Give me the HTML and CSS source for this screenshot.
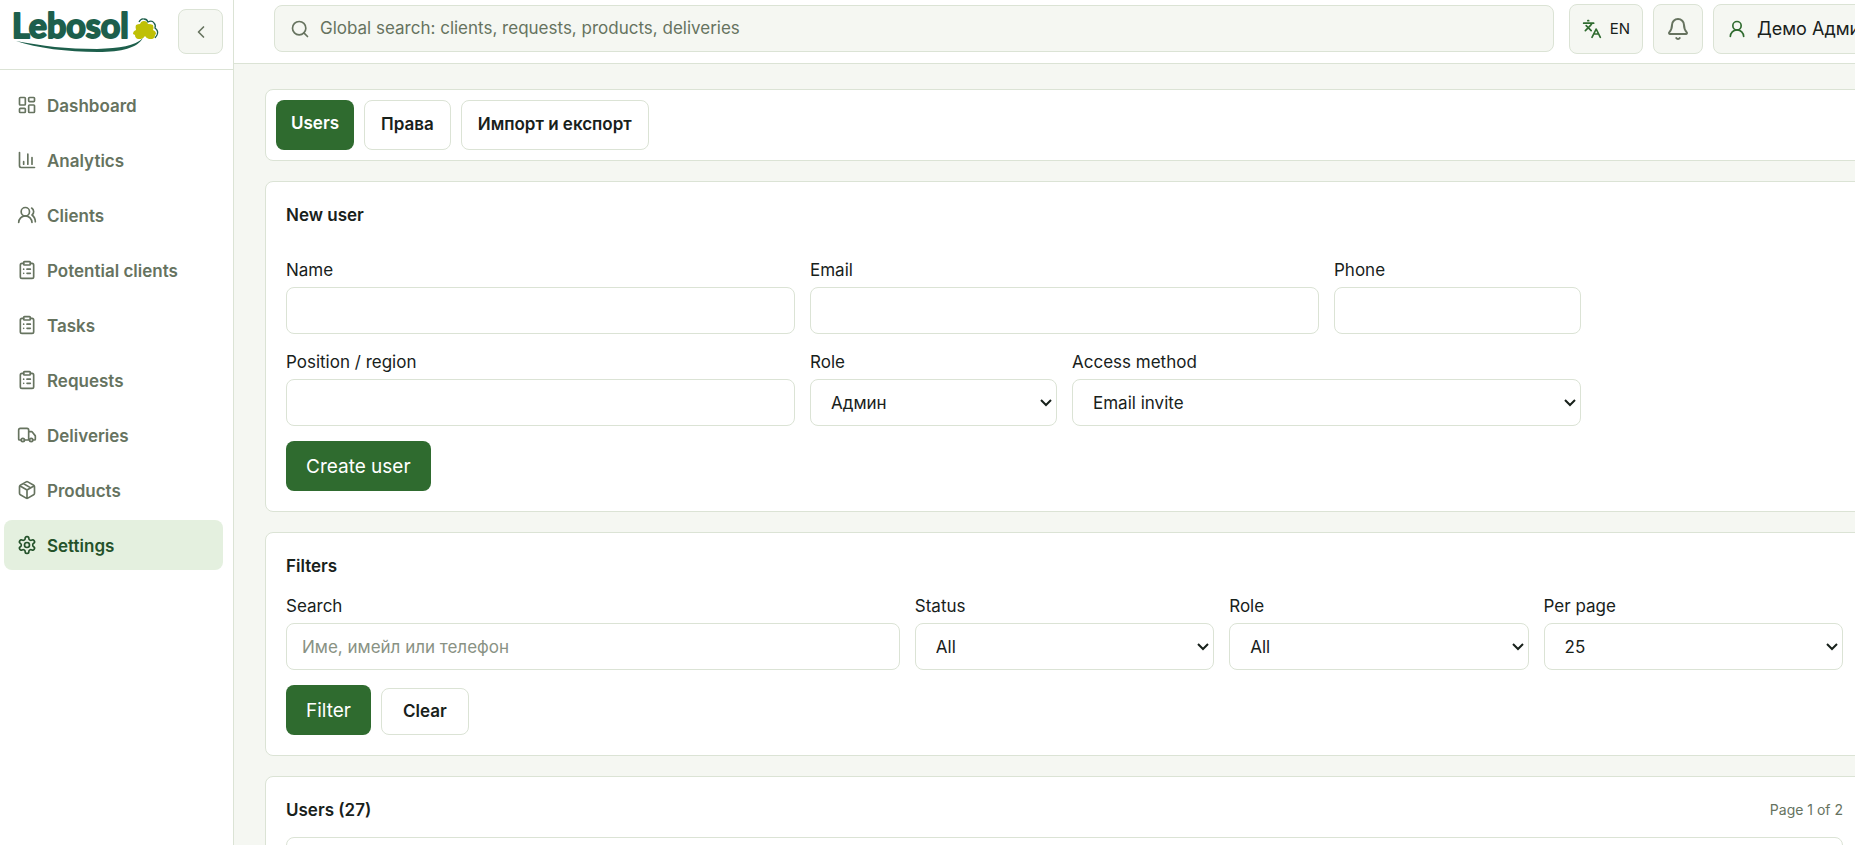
FILE: index.html
```html
<!DOCTYPE html>
<html lang="en">
<head>
	<meta charset="utf-8">
	<title>Settings - Lebosol</title>
	<link rel="stylesheet" href="styles.css">
</head>
<body>
<div class="page">
	<aside class="sidebar">
		<div class="sidebar-head">
			<a class="logo" href="#" aria-label="Lebosol">
				<svg width="150" height="44" viewBox="0 0 150 44">
					<text class="logo-text" x="0" y="28">Lebosol</text>
					<path fill="#1d5f4c" d="M4 31 C30 36 55 39 85 39 C108 38 123 36 131 28 C125 38 110 42 86 42 C55 42 25 38 4 31Z"/>
					<path fill="#bfc006" d="M124 15 q2 -1 4 -1 q1 -3 4 -3 q3 0 4 3 q3 0 5 1 q1 3 0 5 q3 1 3 4 l-1 1 q0 3 -3 4 h-3 q-3 -1 -4 -3 q-1 2 -4 3 h-3 q-3 -1 -3 -4 l-2 -1 q0 -3 3 -4 q-1 -3 0 -5z"/>
					<path fill="none" stroke="#1d5f4c" stroke-width="1.3" d="M127 12 q2 -4 5 -3 q3 0 4 3 q4 -2 6 1 q2 2 1 5 q4 3 2 7 l-2 3"/>
				</svg>
			</a>
			<button class="icon-btn collapse" type="button" aria-label="Collapse menu">
				<svg class="icon" viewBox="0 0 24 24"><path d="m15 18-6-6 6-6"/></svg>
			</button>
		</div>
		<nav class="nav">
			<a href="#"><svg class="icon" viewBox="0 0 24 24"><rect x="3" y="3" width="7" height="9" rx="1"/><rect x="14" y="3" width="7" height="5" rx="1"/><rect x="14" y="12" width="7" height="9" rx="1"/><rect x="3" y="16" width="7" height="5" rx="1"/></svg><span>Dashboard</span></a>
			<a href="#"><svg class="icon" viewBox="0 0 24 24"><path d="M3 3v16a2 2 0 0 0 2 2h16M8 17v-3M13 17V5M18 17V9"/></svg><span>Analytics</span></a>
			<a href="#"><svg class="icon" viewBox="0 0 24 24"><path d="M18 21a8 8 0 0 0-16 0"/><circle cx="10" cy="8" r="5"/><path d="M22 20c0-3.370-2-6.500-4-8a5 5 0 0 0-.450-8.300"/></svg><span>Clients</span></a>
			<a href="#"><svg class="icon" viewBox="0 0 24 24"><rect x="8" y="2" width="8" height="4" rx="1"/><path d="M16 4h2a2 2 0 0 1 2 2v14a2 2 0 0 1-2 2H6a2 2 0 0 1-2-2V6a2 2 0 0 1 2-2h2M12 11h4M12 16h4M8 11h.01M8 16h.01"/></svg><span>Potential clients</span></a>
			<a href="#"><svg class="icon" viewBox="0 0 24 24"><rect x="8" y="2" width="8" height="4" rx="1"/><path d="M16 4h2a2 2 0 0 1 2 2v14a2 2 0 0 1-2 2H6a2 2 0 0 1-2-2V6a2 2 0 0 1 2-2h2M12 11h4M12 16h4M8 11h.01M8 16h.01"/></svg><span>Tasks</span></a>
			<a href="#"><svg class="icon" viewBox="0 0 24 24"><rect x="8" y="2" width="8" height="4" rx="1"/><path d="M16 4h2a2 2 0 0 1 2 2v14a2 2 0 0 1-2 2H6a2 2 0 0 1-2-2V6a2 2 0 0 1 2-2h2M12 11h4M12 16h4M8 11h.01M8 16h.01"/></svg><span>Requests</span></a>
			<a href="#"><svg class="icon" viewBox="0 0 24 24"><path d="M14 18V6a2 2 0 0 0-2-2H4a2 2 0 0 0-2 2v11a1 1 0 0 0 1 1h2M15 18H9M19 18h2a1 1 0 0 0 1-1v-3.650a1 1 0 0 0-.22-.624l-3.480-4.350A1 1 0 0 0 17.520 8H14"/><circle cx="17" cy="18" r="2"/><circle cx="7" cy="18" r="2"/></svg><span>Deliveries</span></a>
			<a href="#"><svg class="icon" viewBox="0 0 24 24"><path d="M11 21.730a2 2 0 0 0 2 0l7-4A2 2 0 0 0 21 16V8a2 2 0 0 0-1-1.730l-7-4a2 2 0 0 0-2 0l-7 4A2 2 0 0 0 3 8v8a2 2 0 0 0 1 1.730zM12 22V12M3.290 7 12 12l8.710-5M7.500 4.270l9 5.150"/></svg><span>Products</span></a>
			<a class="active" href="#"><svg class="icon" viewBox="0 0 24 24"><path d="M12.220 2h-.44a2 2 0 0 0-2 2v.18a2 2 0 0 1-1 1.730l-.43.25a2 2 0 0 1-2 0l-.15-.08a2 2 0 0 0-2.730.73l-.22.38a2 2 0 0 0 .73 2.730l.15.1a2 2 0 0 1 1 1.720v.51a2 2 0 0 1-1 1.740l-.15.09a2 2 0 0 0-.73 2.730l.22.38a2 2 0 0 0 2.730.73l.15-.08a2 2 0 0 1 2 0l.43.25a2 2 0 0 1 1 1.730V20a2 2 0 0 0 2 2h.44a2 2 0 0 0 2-2v-.18a2 2 0 0 1 1-1.730l.43-.25a2 2 0 0 1 2 0l.15.08a2 2 0 0 0 2.730-.73l.22-.39a2 2 0 0 0-.73-2.730l-.15-.08a2 2 0 0 1-1-1.740v-.5a2 2 0 0 1 1-1.740l.15-.09a2 2 0 0 0 .73-2.730l-.22-.38a2 2 0 0 0-2.730-.73l-.15.08a2 2 0 0 1-2 0l-.43-.25a2 2 0 0 1-1-1.730V4a2 2 0 0 0-2-2z"/><circle cx="12" cy="12" r="3"/></svg><span>Settings</span></a>
		</nav>
	</aside>

	<div class="content">
		<header class="topbar">
			<label class="global-search">
				<svg class="icon" viewBox="0 0 24 24"><circle cx="11" cy="11" r="8"/><path d="m21 21-4.340-4.340"/></svg>
				<input type="search" aria-label="Global search" placeholder="Global search: clients, requests, products, deliveries">
			</label>
			<div class="top-actions">
				<button class="icon-btn lang" type="button">
					<svg class="icon green" viewBox="0 0 24 24"><path d="m5 8 6 6M4 14l6-6 2-3M2 5h12M7 2h1M22 22l-5-10-5 10M14 18h6"/></svg>
					EN
				</button>
				<button class="icon-btn bell" type="button" aria-label="Notifications">
					<svg class="icon" viewBox="0 0 24 24"><path d="M10.270 21a2 2 0 0 0 3.460 0M3.260 15.330A1 1 0 0 0 4 17h16a1 1 0 0 0 .74-1.670C19.410 13.960 18 12.500 18 8A6 6 0 0 0 6 8c0 4.500-1.410 5.960-2.740 7.330"/></svg>
				</button>
				<button class="icon-btn user" type="button">
					<svg class="icon green" viewBox="0 0 24 24"><circle cx="12" cy="8" r="5"/><path d="M20 21a8 8 0 0 0-16 0"/></svg>
					Демо Админ
				</button>
			</div>
		</header>

		<main class="main">
			<div class="card tabs">
				<a class="tab active" href="#">Users</a>
				<a class="tab" href="#">Права</a>
				<a class="tab" href="#">Импорт и експорт</a>
			</div>

			<section class="card">
				<h2>New user</h2>
				<form class="user-form">
					<div class="field wide">
						<label for="name">Name</label>
						<input id="name" type="text">
					</div>
					<div class="field wide">
						<label for="email">Email</label>
						<input id="email" type="email">
					</div>
					<div class="field">
						<label for="phone">Phone</label>
						<input id="phone" type="tel">
					</div>
					<div class="field wide new-row">
						<label for="position">Position / region</label>
						<input id="position" type="text">
					</div>
					<div class="field">
						<label for="role">Role</label>
						<select id="role"><option>Админ</option></select>
					</div>
					<div class="field wide">
						<label for="access">Access method</label>
						<select id="access"><option>Email invite</option></select>
					</div>
					<div class="actions">
						<button class="btn primary" type="button">Create user</button>
					</div>
				</form>
			</section>

			<section class="card">
				<h2>Filters</h2>
				<form class="filter-form">
					<div class="field wide">
						<label for="search">Search</label>
						<input id="search" type="text" placeholder="Име, имейл или телефон">
					</div>
					<div class="field">
						<label for="status">Status</label>
						<select id="status"><option>All</option></select>
					</div>
					<div class="field">
						<label for="filter-role">Role</label>
						<select id="filter-role"><option>All</option></select>
					</div>
					<div class="field">
						<label for="per-page">Per page</label>
						<select id="per-page"><option>25</option></select>
					</div>
					<div class="actions">
						<button class="btn primary" type="button">Filter</button>
						<button class="btn" type="reset">Clear</button>
					</div>
				</form>
			</section>

			<section class="card">
				<div class="card-head">
					<h2>Users (27)</h2>
					<span class="pages">Page 1 of 2</span>
				</div>
				<div class="table-wrap"></div>
			</section>
		</main>
	</div>
</div>
</body>
</html>
```
FILE: styles.css
```css
* {
  box-sizing: border-box;
}
body {
  margin: 0;
  height: 100vh;
  overflow: hidden;
  background-color: #f5f7f2;
  color: #18211b;
  font-family: Inter, "Noto Sans", sans-serif;
  font-size: 17px;
  line-height: 25px;
}
a {
  color: inherit;
  text-decoration: none;
}
button, input, select {
  font: inherit;
  color: inherit;
}
.page {
  display: grid;
  grid-template-columns: 234px 1fr;
  width: calc(100% + 40px);
  min-height: 100vh;
}
.icon {
  flex: none;
  width: 20px;
  height: 20px;
  fill: none;
  stroke: currentColor;
  stroke-width: 2;
  stroke-linecap: round;
  stroke-linejoin: round;
}
.green {
  color: #2f6b2f;
}

/* sidebar */
.sidebar {
  background-color: #fff;
  border-right: 1px solid #dbe3d5;
}
.sidebar-head {
  display: flex;
  align-items: center;
  justify-content: space-between;
  height: 70px;
  padding: 0 10px 6px 12px;
  border-bottom: 1px solid #dbe3d5;
}
.logo svg {
  display: block;
  overflow: visible;
}
.logo-text {
  font-family: Lato, sans-serif;
  font-size: 34px;
  font-weight: 700;
  fill: #1d5f4c;
  stroke: #1d5f4c;
  stroke-width: 2;
  stroke-linejoin: round;
}
.icon-btn {
  display: flex;
  align-items: center;
  justify-content: center;
  height: 50px;
  padding: 0 13px;
  border: 1px solid #dbe3d5;
  border-radius: 8px;
  background-color: #f5f7f2;
  cursor: pointer;
}
.collapse {
  width: 45px;
  height: 45px;
  padding: 0;
  color: #66735f;
}
.nav {
  display: flex;
  flex-direction: column;
  gap: 5px;
  padding: 10px 10px 10px 4px;
}
.nav a {
  display: flex;
  align-items: center;
  gap: 10px;
  height: 50px;
  padding: 0 13px;
  border-radius: 8px;
  color: #66735f;
  font-weight: 600;
}
.nav span {
  padding-top: 2px;
}
.nav a.active {
  background-color: #e4f0df;
  color: #24522a;
}

/* top bar */
.content {
  display: flex;
  flex-direction: column;
}
.topbar {
  display: flex;
  align-items: center;
  gap: 15px;
  height: 64px;
  padding: 0 10px 6px 40px;
  border-bottom: 1px solid #dbe3d5;
  background-color: #fff;
}
.global-search {
  display: flex;
  flex: 1;
  align-items: center;
  gap: 10px;
  height: 47px;
  padding: 0 15px;
  border: 1px solid #dbe3d5;
  border-radius: 8px;
  background-color: #f5f7f2;
  color: #66735f;
}
.global-search input {
  flex: 1;
  padding: 0;
  border: 0;
  background: none;
  outline: none;
}
.global-search input::placeholder {
  color: #66735f;
}
.top-actions {
  display: flex;
  gap: 10px;
}
.lang {
  gap: 8px;
  width: 74px;
  font-size: 15px;
}
.bell {
  width: 50px;
  color: #66735f;
}
.bell .icon {
  width: 24px;
  height: 24px;
}
.user {
  justify-content: flex-start;
  gap: 10px;
  width: 172px;
  font-size: 18px;
  white-space: nowrap;
}

/* cards */
.main {
  display: flex;
  flex-direction: column;
  gap: 20px;
  padding: 25px 31px;
}
.card {
  padding: 20px;
  border: 1px solid #dbe3d5;
  border-radius: 8px;
  background-color: #fff;
}
.tabs {
  display: flex;
  gap: 10px;
  padding: 10px;
}
.tab {
  height: 50px;
  padding: 11px 16px;
  border: 1px solid #dbe3d5;
  border-radius: 8px;
  font-weight: 600;
}
.tab.active {
  padding: 11px 15px;
  border: 0;
  background-color: #2f6b2f;
  color: #fff;
}
h2 {
  margin: 0 0 14px;
  font-size: 17px;
  font-weight: 600;
  line-height: 26px;
}
.card-head {
  display: flex;
  justify-content: space-between;
}
.pages {
  color: #66735f;
  font-size: 14px;
}

/* forms */
.user-form, .filter-form {
  display: grid;
  grid-template-columns: repeat(6, 1fr);
  gap: 15px;
}
.user-form {
  padding-top: 15px;
}
.filter-form {
  grid-template-columns: repeat(5, 1fr);
}
.field {
  display: flex;
  flex-direction: column;
  gap: 3px;
}
.field label {
  line-height: 27px;
}
.wide {
  grid-column-end: span 2;
}
.new-row {
  grid-column-start: 1;
}
.field input, .field select {
  width: 100%;
  height: 47px;
  padding: 0 15px;
  border: 1px solid #dbe3d5;
  border-radius: 8px;
  background-color: #fff;
}
.field select {
  appearance: none;
  padding: 1px 20px 0;
  background: #fff url("data:image/svg+xml,%3Csvg xmlns='http://www.w3.org/2000/svg' width='12' height='8' fill='none' stroke='%2318211b' stroke-width='2'%3E%3Cpath d='M1 1l5 5 5-5'/%3E%3C/svg%3E") no-repeat right 4px center;
}
.field input::placeholder {
  color: #899284;
}
.actions {
  display: flex;
  grid-column: 1 / -1;
  align-items: flex-end;
  gap: 10px;
}
.btn {
  height: 47px;
  padding: 0 21px;
  border: 1px solid #dbe3d5;
  border-radius: 8px;
  background-color: #fff;
  font-weight: 600;
  cursor: pointer;
}
.btn.primary {
  height: 50px;
  padding: 0 20px;
  border: 0;
  background-color: #2f6b2f;
  color: #fff;
  font-size: 19px;
  font-weight: 400;
}
.table-wrap {
  height: 200px;
  border: 1px solid #dbe3d5;
  border-radius: 8px;
}
```
